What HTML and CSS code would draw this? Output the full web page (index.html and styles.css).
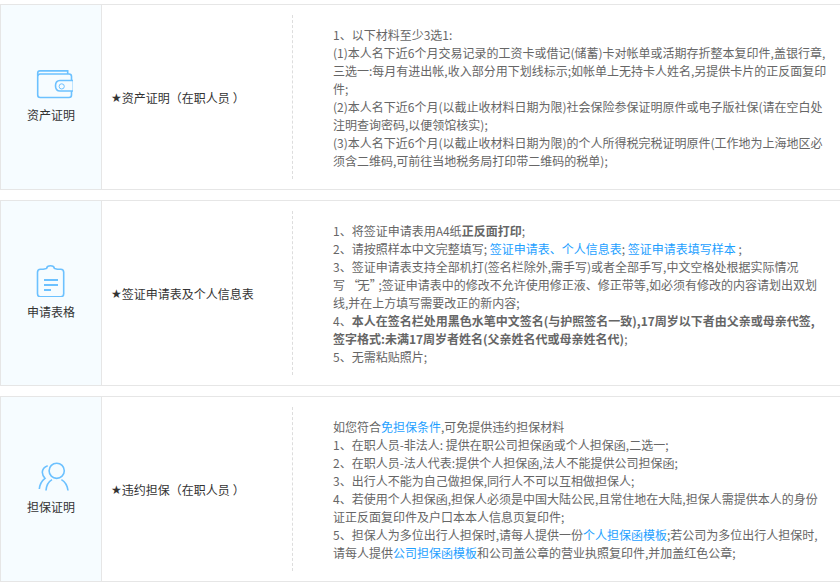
FILE: index.html
```html
<!DOCTYPE html>
<html lang="zh-CN">
<head>
<meta charset="utf-8">
<title>签证材料</title>
<link rel="stylesheet" href="styles.css">
</head>
<body>
<div class="list">
  <section class="row">
    <div class="side">
      <svg class="icon" width="44" height="30" viewBox="0 0 44 30" fill="none">
        <path d="M8.7 6V3Q8.7 0.9 11 0.9H38.7V4" />
        <path d="M42.5 10.5V6.5Q42.5 4 40 4H11.2Q8.7 4 8.7 6.5V25Q8.7 27.5 11.2 27.5H40Q42.5 27.5 42.5 25V21" />
        <path d="M44.4 10.5H31Q26.5 10.5 26.5 15.8Q26.5 21 31 21H44.4Z" />
        <circle class="thin" cx="32.7" cy="16.4" r="2.6" />
      </svg>
      <span class="label">资产证明</span>
    </div>
    <div class="title"><span class="star">★</span>资产证明（在职人员<span class="close">）</span></div>
    <div class="detail">
      1、以下材料至少3选1:<br>
      (1)本人名下近6个月交易记录的工资卡或借记(储蓄)卡对帐单或活期存折整本复印件,盖银行章,<br>
      三选一:每月有进出帐,收入部分用下划线标示;如帐单上无持卡人姓名,另提供卡片的正反面复印<br>
      件;<br>
      (2)本人名下近6个月(以截止收材料日期为限)社会保险参保证明原件或电子版社保(请在空白处<br>
      注明查询密码,以便领馆核实);<br>
      (3)本人名下近6个月(以截止收材料日期为限)的个人所得税完税证明原件(工作地为上海地区必<br>
      须含二维码,可前往当地税务局打印带二维码的税单);
    </div>
  </section>

  <section class="row">
    <div class="side">
      <svg class="icon" width="44" height="32" viewBox="0 0 44 32" fill="none">
        <path d="M14.3 4.3H11.5Q8.5 4.3 8.5 7.3V28.7Q8.5 31.7 11.5 31.7H31.7Q34.7 31.7 34.7 28.7V7.3Q34.7 4.3 31.7 4.3H28.3L25.4 3.4Q25 0.8 21.5 0.8Q18 0.8 17.6 3.4Z" />
        <path class="bar" d="M15 15H29M15 20H29M15 25H22" />
      </svg>
      <span class="label">申请表格</span>
    </div>
    <div class="title"><span class="star">★</span>签证申请表及个人信息表</div>
    <div class="detail">
      1、将签证申请表用A4纸<b>正反面打印</b>;<br>
      2、请按照样本中文完整填写; <a href="#">签证申请表、个人信息表</a>; <a href="#">签证申请表填写样本</a> ;<br>
      3、签证申请表支持全部机打(签名栏除外,需手写)或者全部手写,中文空格处根据实际情况<br>
      写 <span class="quote-open">“</span>无<span class="quote-close">”</span> ;签证申请表中的修改不允许使用修正液、修正带等,如必须有修改的内容请划出双划<br>
      线,并在上方填写需要改正的新内容;<br>
      4、<b>本人在签名栏处用黑色水笔中文签名(与护照签名一致),17周岁以下者由父亲或母亲代签,</b><br>
      <b>签字格式:未满17周岁者姓名(父亲姓名代或母亲姓名代)</b>;<br>
      5、无需粘贴照片;
    </div>
  </section>

  <section class="row">
    <div class="side">
      <svg class="icon" width="44" height="30" viewBox="0 0 44 30" fill="none">
        <circle cx="27.7" cy="8.8" r="7.6" />
        <path d="M17 28.5Q17.5 20.8 23 17.6M32.4 17.6Q38 20.8 39 28.5" />
        <path d="M18.7 3.7Q13.5 5.5 13.3 10.3Q13.5 14 16 16.3Q11 20 10.3 27" />
      </svg>
      <span class="label">担保证明</span>
    </div>
    <div class="title"><span class="star">★</span>违约担保（在职人员<span class="close">）</span></div>
    <div class="detail">
      如您符合<a href="#">免担保条件</a>,可免提供违约担保材料<br>
      1、在职人员-非法人: 提供在职公司担保函或个人担保函,二选一;<br>
      2、在职人员-法人代表:提供个人担保函,法人不能提供公司担保函;<br>
      3、出行人不能为自己做担保,同行人不可以互相做担保人;<br>
      4、若使用个人担保函,担保人必须是中国大陆公民,且常住地在大陆,担保人需提供本人的身份<br>
      证正反面复印件及户口本本人信息页复印件;<br>
      5、担保人为多位出行人担保时,请每人提供一份<a href="#">个人担保函模板</a>;若公司为多位出行人担保时,<br>
      请每人提供<a href="#">公司担保函模板</a>和公司盖公章的营业执照复印件,并加盖红色公章;
    </div>
  </section>
</div>
</body>
</html>
```

FILE: styles.css
```css
* {
  box-sizing: border-box;
}

body {
  margin: 0;
  background: #fff;
  font-family: "Noto Sans CJK SC", sans-serif;
  font-size: 12px;
  line-height: 18px;
  color: #666;
  text-spacing-trim: space-all;
}

.list {
  padding-top: 4px;
}

.row {
  display: flex;
  height: 186px;
  margin-bottom: 10px;
  border-top: 1px solid #e6e6e6;
  border-bottom: 1px solid #e6e6e6;
  border-left: 1px solid #e6e6e6;
}

.side {
  width: 101px;
  flex: none;
  display: flex;
  flex-direction: column;
  align-items: center;
  justify-content: center;
  gap: 6px;
  background: #f6fcff;
  border-right: 1px solid #e6e6e6;
  color: #333;
}

.icon {
  display: block;
  stroke: #6cc1ff;
  stroke-width: 1.6;
}

.icon .thin {
  stroke-width: 1;
}

.icon .bar {
  stroke-width: 2;
}

.label {
  display: block;
}

.title {
  width: 190px;
  flex: none;
  display: flex;
  align-items: center;
  padding: 2px 0 0 9px;
  color: #333;
  white-space: nowrap;
}

.star {
  font-family: "DejaVu Sans", sans-serif;
}

.close {
  margin-left: 3px;
}

.quote-open {
  letter-spacing: -2px;
}

.quote-close {
  letter-spacing: -6px;
}

.detail {
  flex: 1;
  display: block;
  margin: 10px 0;
  padding: 11px 0 0 40px;
  border-left: 1px dashed #ddd;
  white-space: nowrap;
}

.detail a {
  color: #1e9fff;
  text-decoration: none;
}

.detail b {
  font-weight: 700;
}
```
